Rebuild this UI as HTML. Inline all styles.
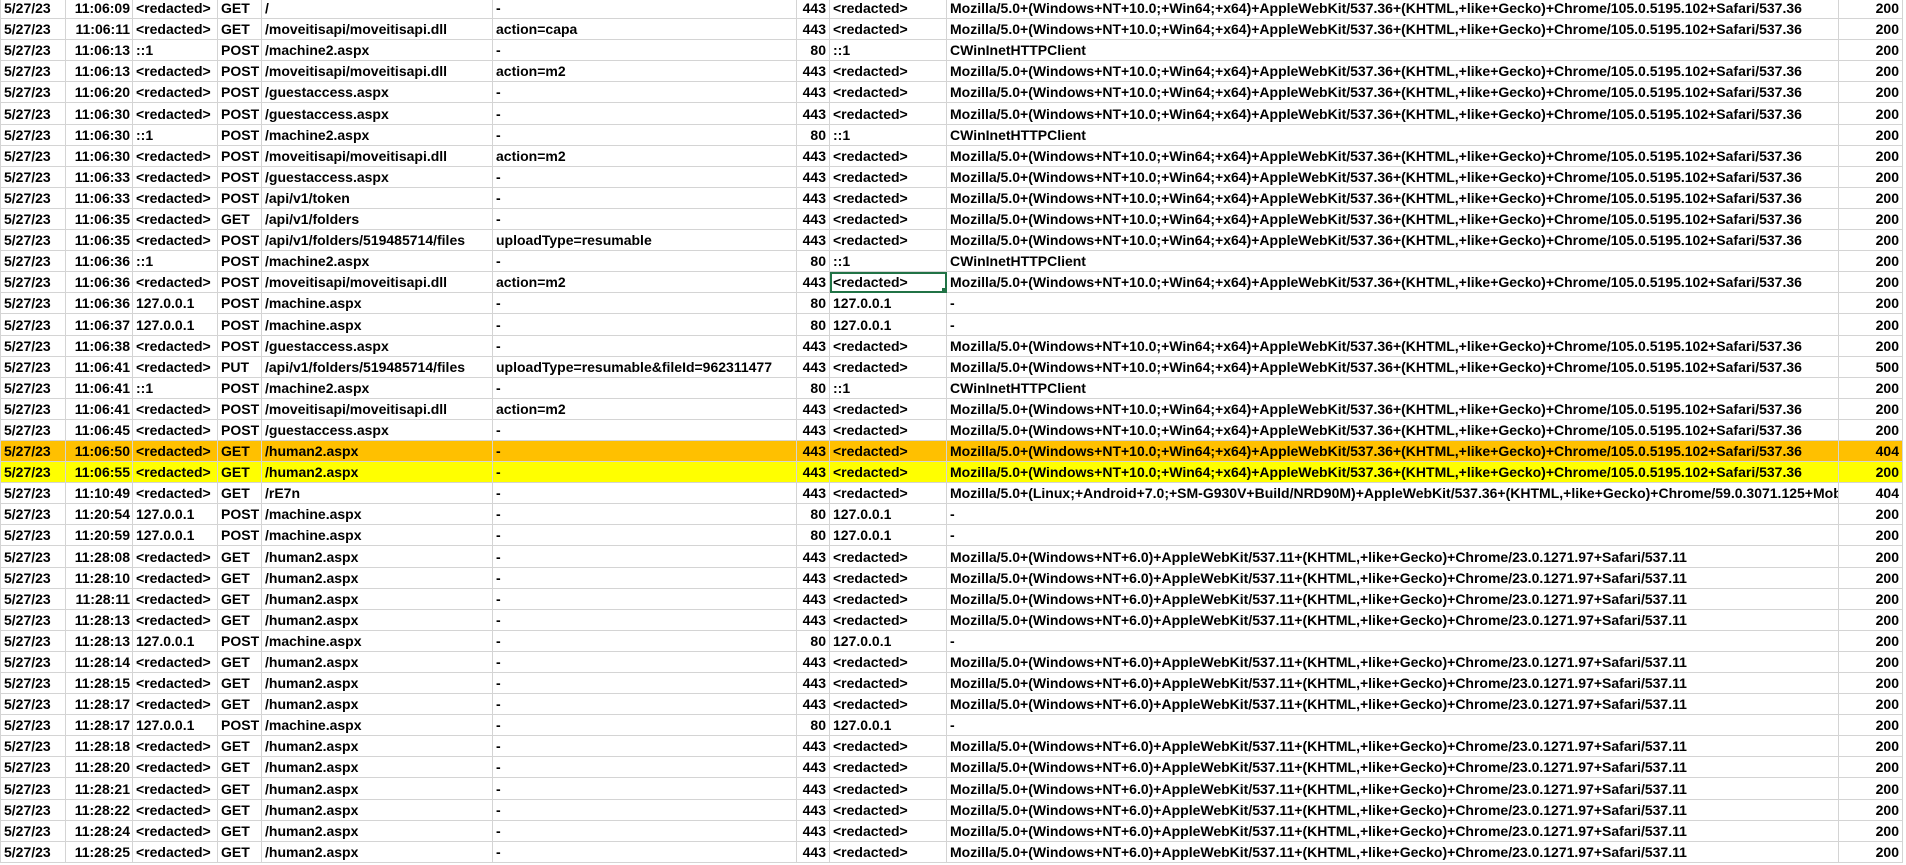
<!DOCTYPE html>
<html><head><meta charset="utf-8"><style>
html,body{margin:0;padding:0;background:#fff;width:1906px;height:865px;overflow:hidden}
table{position:absolute;left:0;top:-3px;border-collapse:collapse;table-layout:fixed;width:1902px;font-family:"Liberation Sans",Arial,sans-serif;font-weight:bold;font-size:14px;color:#000}
tr{height:21.1px}
td{border:1px solid #d4d4d4;height:21.1px;padding:0 3px 1px 3px;white-space:nowrap;overflow:hidden;vertical-align:bottom;line-height:17px;box-sizing:border-box}
td.r{text-align:right}
td.t{text-align:right;padding-right:2px}
tr.o td{background:#ffc000}
tr.y td{background:#ffff00}
td.sel{outline:2px solid #217346;outline-offset:-2px;position:relative}
td.sel:after{content:"";position:absolute;right:-1px;bottom:-1px;width:5px;height:5px;background:#217346}
</style></head><body>
<table>
<colgroup><col style="width:65px"><col style="width:67px"><col style="width:85px"><col style="width:44px"><col style="width:231px"><col style="width:304px"><col style="width:33px"><col style="width:117px"><col style="width:892px"><col style="width:64px"></colgroup>
<tr><td>5/27/23</td><td class="t">11:06:09</td><td>&lt;redacted&gt;</td><td>GET</td><td>/</td><td>-</td><td class="r">443</td><td>&lt;redacted&gt;</td><td>Mozilla/5.0+(Windows+NT+10.0;+Win64;+x64)+AppleWebKit/537.36+(KHTML,+like+Gecko)+Chrome/105.0.5195.102+Safari/537.36</td><td class="r">200</td></tr>
<tr><td>5/27/23</td><td class="t">11:06:11</td><td>&lt;redacted&gt;</td><td>GET</td><td>/moveitisapi/moveitisapi.dll</td><td>action=capa</td><td class="r">443</td><td>&lt;redacted&gt;</td><td>Mozilla/5.0+(Windows+NT+10.0;+Win64;+x64)+AppleWebKit/537.36+(KHTML,+like+Gecko)+Chrome/105.0.5195.102+Safari/537.36</td><td class="r">200</td></tr>
<tr><td>5/27/23</td><td class="t">11:06:13</td><td>::1</td><td>POST</td><td>/machine2.aspx</td><td>-</td><td class="r">80</td><td>::1</td><td>CWinInetHTTPClient</td><td class="r">200</td></tr>
<tr><td>5/27/23</td><td class="t">11:06:13</td><td>&lt;redacted&gt;</td><td>POST</td><td>/moveitisapi/moveitisapi.dll</td><td>action=m2</td><td class="r">443</td><td>&lt;redacted&gt;</td><td>Mozilla/5.0+(Windows+NT+10.0;+Win64;+x64)+AppleWebKit/537.36+(KHTML,+like+Gecko)+Chrome/105.0.5195.102+Safari/537.36</td><td class="r">200</td></tr>
<tr><td>5/27/23</td><td class="t">11:06:20</td><td>&lt;redacted&gt;</td><td>POST</td><td>/guestaccess.aspx</td><td>-</td><td class="r">443</td><td>&lt;redacted&gt;</td><td>Mozilla/5.0+(Windows+NT+10.0;+Win64;+x64)+AppleWebKit/537.36+(KHTML,+like+Gecko)+Chrome/105.0.5195.102+Safari/537.36</td><td class="r">200</td></tr>
<tr><td>5/27/23</td><td class="t">11:06:30</td><td>&lt;redacted&gt;</td><td>POST</td><td>/guestaccess.aspx</td><td>-</td><td class="r">443</td><td>&lt;redacted&gt;</td><td>Mozilla/5.0+(Windows+NT+10.0;+Win64;+x64)+AppleWebKit/537.36+(KHTML,+like+Gecko)+Chrome/105.0.5195.102+Safari/537.36</td><td class="r">200</td></tr>
<tr><td>5/27/23</td><td class="t">11:06:30</td><td>::1</td><td>POST</td><td>/machine2.aspx</td><td>-</td><td class="r">80</td><td>::1</td><td>CWinInetHTTPClient</td><td class="r">200</td></tr>
<tr><td>5/27/23</td><td class="t">11:06:30</td><td>&lt;redacted&gt;</td><td>POST</td><td>/moveitisapi/moveitisapi.dll</td><td>action=m2</td><td class="r">443</td><td>&lt;redacted&gt;</td><td>Mozilla/5.0+(Windows+NT+10.0;+Win64;+x64)+AppleWebKit/537.36+(KHTML,+like+Gecko)+Chrome/105.0.5195.102+Safari/537.36</td><td class="r">200</td></tr>
<tr><td>5/27/23</td><td class="t">11:06:33</td><td>&lt;redacted&gt;</td><td>POST</td><td>/guestaccess.aspx</td><td>-</td><td class="r">443</td><td>&lt;redacted&gt;</td><td>Mozilla/5.0+(Windows+NT+10.0;+Win64;+x64)+AppleWebKit/537.36+(KHTML,+like+Gecko)+Chrome/105.0.5195.102+Safari/537.36</td><td class="r">200</td></tr>
<tr><td>5/27/23</td><td class="t">11:06:33</td><td>&lt;redacted&gt;</td><td>POST</td><td>/api/v1/token</td><td>-</td><td class="r">443</td><td>&lt;redacted&gt;</td><td>Mozilla/5.0+(Windows+NT+10.0;+Win64;+x64)+AppleWebKit/537.36+(KHTML,+like+Gecko)+Chrome/105.0.5195.102+Safari/537.36</td><td class="r">200</td></tr>
<tr><td>5/27/23</td><td class="t">11:06:35</td><td>&lt;redacted&gt;</td><td>GET</td><td>/api/v1/folders</td><td>-</td><td class="r">443</td><td>&lt;redacted&gt;</td><td>Mozilla/5.0+(Windows+NT+10.0;+Win64;+x64)+AppleWebKit/537.36+(KHTML,+like+Gecko)+Chrome/105.0.5195.102+Safari/537.36</td><td class="r">200</td></tr>
<tr><td>5/27/23</td><td class="t">11:06:35</td><td>&lt;redacted&gt;</td><td>POST</td><td>/api/v1/folders/519485714/files</td><td>uploadType=resumable</td><td class="r">443</td><td>&lt;redacted&gt;</td><td>Mozilla/5.0+(Windows+NT+10.0;+Win64;+x64)+AppleWebKit/537.36+(KHTML,+like+Gecko)+Chrome/105.0.5195.102+Safari/537.36</td><td class="r">200</td></tr>
<tr><td>5/27/23</td><td class="t">11:06:36</td><td>::1</td><td>POST</td><td>/machine2.aspx</td><td>-</td><td class="r">80</td><td>::1</td><td>CWinInetHTTPClient</td><td class="r">200</td></tr>
<tr><td>5/27/23</td><td class="t">11:06:36</td><td>&lt;redacted&gt;</td><td>POST</td><td>/moveitisapi/moveitisapi.dll</td><td>action=m2</td><td class="r">443</td><td class="sel">&lt;redacted&gt;</td><td>Mozilla/5.0+(Windows+NT+10.0;+Win64;+x64)+AppleWebKit/537.36+(KHTML,+like+Gecko)+Chrome/105.0.5195.102+Safari/537.36</td><td class="r">200</td></tr>
<tr><td>5/27/23</td><td class="t">11:06:36</td><td>127.0.0.1</td><td>POST</td><td>/machine.aspx</td><td>-</td><td class="r">80</td><td>127.0.0.1</td><td>-</td><td class="r">200</td></tr>
<tr><td>5/27/23</td><td class="t">11:06:37</td><td>127.0.0.1</td><td>POST</td><td>/machine.aspx</td><td>-</td><td class="r">80</td><td>127.0.0.1</td><td>-</td><td class="r">200</td></tr>
<tr><td>5/27/23</td><td class="t">11:06:38</td><td>&lt;redacted&gt;</td><td>POST</td><td>/guestaccess.aspx</td><td>-</td><td class="r">443</td><td>&lt;redacted&gt;</td><td>Mozilla/5.0+(Windows+NT+10.0;+Win64;+x64)+AppleWebKit/537.36+(KHTML,+like+Gecko)+Chrome/105.0.5195.102+Safari/537.36</td><td class="r">200</td></tr>
<tr><td>5/27/23</td><td class="t">11:06:41</td><td>&lt;redacted&gt;</td><td>PUT</td><td>/api/v1/folders/519485714/files</td><td>uploadType=resumable&amp;fileId=962311477</td><td class="r">443</td><td>&lt;redacted&gt;</td><td>Mozilla/5.0+(Windows+NT+10.0;+Win64;+x64)+AppleWebKit/537.36+(KHTML,+like+Gecko)+Chrome/105.0.5195.102+Safari/537.36</td><td class="r">500</td></tr>
<tr><td>5/27/23</td><td class="t">11:06:41</td><td>::1</td><td>POST</td><td>/machine2.aspx</td><td>-</td><td class="r">80</td><td>::1</td><td>CWinInetHTTPClient</td><td class="r">200</td></tr>
<tr><td>5/27/23</td><td class="t">11:06:41</td><td>&lt;redacted&gt;</td><td>POST</td><td>/moveitisapi/moveitisapi.dll</td><td>action=m2</td><td class="r">443</td><td>&lt;redacted&gt;</td><td>Mozilla/5.0+(Windows+NT+10.0;+Win64;+x64)+AppleWebKit/537.36+(KHTML,+like+Gecko)+Chrome/105.0.5195.102+Safari/537.36</td><td class="r">200</td></tr>
<tr><td>5/27/23</td><td class="t">11:06:45</td><td>&lt;redacted&gt;</td><td>POST</td><td>/guestaccess.aspx</td><td>-</td><td class="r">443</td><td>&lt;redacted&gt;</td><td>Mozilla/5.0+(Windows+NT+10.0;+Win64;+x64)+AppleWebKit/537.36+(KHTML,+like+Gecko)+Chrome/105.0.5195.102+Safari/537.36</td><td class="r">200</td></tr>
<tr class="o"><td>5/27/23</td><td class="t">11:06:50</td><td>&lt;redacted&gt;</td><td>GET</td><td>/human2.aspx</td><td>-</td><td class="r">443</td><td>&lt;redacted&gt;</td><td>Mozilla/5.0+(Windows+NT+10.0;+Win64;+x64)+AppleWebKit/537.36+(KHTML,+like+Gecko)+Chrome/105.0.5195.102+Safari/537.36</td><td class="r">404</td></tr>
<tr class="y"><td>5/27/23</td><td class="t">11:06:55</td><td>&lt;redacted&gt;</td><td>GET</td><td>/human2.aspx</td><td>-</td><td class="r">443</td><td>&lt;redacted&gt;</td><td>Mozilla/5.0+(Windows+NT+10.0;+Win64;+x64)+AppleWebKit/537.36+(KHTML,+like+Gecko)+Chrome/105.0.5195.102+Safari/537.36</td><td class="r">200</td></tr>
<tr><td>5/27/23</td><td class="t">11:10:49</td><td>&lt;redacted&gt;</td><td>GET</td><td>/rE7n</td><td>-</td><td class="r">443</td><td>&lt;redacted&gt;</td><td>Mozilla/5.0+(Linux;+Android+7.0;+SM-G930V+Build/NRD90M)+AppleWebKit/537.36+(KHTML,+like+Gecko)+Chrome/59.0.3071.125+Mobile+Safari/537.36</td><td class="r">404</td></tr>
<tr><td>5/27/23</td><td class="t">11:20:54</td><td>127.0.0.1</td><td>POST</td><td>/machine.aspx</td><td>-</td><td class="r">80</td><td>127.0.0.1</td><td>-</td><td class="r">200</td></tr>
<tr><td>5/27/23</td><td class="t">11:20:59</td><td>127.0.0.1</td><td>POST</td><td>/machine.aspx</td><td>-</td><td class="r">80</td><td>127.0.0.1</td><td>-</td><td class="r">200</td></tr>
<tr><td>5/27/23</td><td class="t">11:28:08</td><td>&lt;redacted&gt;</td><td>GET</td><td>/human2.aspx</td><td>-</td><td class="r">443</td><td>&lt;redacted&gt;</td><td>Mozilla/5.0+(Windows+NT+6.0)+AppleWebKit/537.11+(KHTML,+like+Gecko)+Chrome/23.0.1271.97+Safari/537.11</td><td class="r">200</td></tr>
<tr><td>5/27/23</td><td class="t">11:28:10</td><td>&lt;redacted&gt;</td><td>GET</td><td>/human2.aspx</td><td>-</td><td class="r">443</td><td>&lt;redacted&gt;</td><td>Mozilla/5.0+(Windows+NT+6.0)+AppleWebKit/537.11+(KHTML,+like+Gecko)+Chrome/23.0.1271.97+Safari/537.11</td><td class="r">200</td></tr>
<tr><td>5/27/23</td><td class="t">11:28:11</td><td>&lt;redacted&gt;</td><td>GET</td><td>/human2.aspx</td><td>-</td><td class="r">443</td><td>&lt;redacted&gt;</td><td>Mozilla/5.0+(Windows+NT+6.0)+AppleWebKit/537.11+(KHTML,+like+Gecko)+Chrome/23.0.1271.97+Safari/537.11</td><td class="r">200</td></tr>
<tr><td>5/27/23</td><td class="t">11:28:13</td><td>&lt;redacted&gt;</td><td>GET</td><td>/human2.aspx</td><td>-</td><td class="r">443</td><td>&lt;redacted&gt;</td><td>Mozilla/5.0+(Windows+NT+6.0)+AppleWebKit/537.11+(KHTML,+like+Gecko)+Chrome/23.0.1271.97+Safari/537.11</td><td class="r">200</td></tr>
<tr><td>5/27/23</td><td class="t">11:28:13</td><td>127.0.0.1</td><td>POST</td><td>/machine.aspx</td><td>-</td><td class="r">80</td><td>127.0.0.1</td><td>-</td><td class="r">200</td></tr>
<tr><td>5/27/23</td><td class="t">11:28:14</td><td>&lt;redacted&gt;</td><td>GET</td><td>/human2.aspx</td><td>-</td><td class="r">443</td><td>&lt;redacted&gt;</td><td>Mozilla/5.0+(Windows+NT+6.0)+AppleWebKit/537.11+(KHTML,+like+Gecko)+Chrome/23.0.1271.97+Safari/537.11</td><td class="r">200</td></tr>
<tr><td>5/27/23</td><td class="t">11:28:15</td><td>&lt;redacted&gt;</td><td>GET</td><td>/human2.aspx</td><td>-</td><td class="r">443</td><td>&lt;redacted&gt;</td><td>Mozilla/5.0+(Windows+NT+6.0)+AppleWebKit/537.11+(KHTML,+like+Gecko)+Chrome/23.0.1271.97+Safari/537.11</td><td class="r">200</td></tr>
<tr><td>5/27/23</td><td class="t">11:28:17</td><td>&lt;redacted&gt;</td><td>GET</td><td>/human2.aspx</td><td>-</td><td class="r">443</td><td>&lt;redacted&gt;</td><td>Mozilla/5.0+(Windows+NT+6.0)+AppleWebKit/537.11+(KHTML,+like+Gecko)+Chrome/23.0.1271.97+Safari/537.11</td><td class="r">200</td></tr>
<tr><td>5/27/23</td><td class="t">11:28:17</td><td>127.0.0.1</td><td>POST</td><td>/machine.aspx</td><td>-</td><td class="r">80</td><td>127.0.0.1</td><td>-</td><td class="r">200</td></tr>
<tr><td>5/27/23</td><td class="t">11:28:18</td><td>&lt;redacted&gt;</td><td>GET</td><td>/human2.aspx</td><td>-</td><td class="r">443</td><td>&lt;redacted&gt;</td><td>Mozilla/5.0+(Windows+NT+6.0)+AppleWebKit/537.11+(KHTML,+like+Gecko)+Chrome/23.0.1271.97+Safari/537.11</td><td class="r">200</td></tr>
<tr><td>5/27/23</td><td class="t">11:28:20</td><td>&lt;redacted&gt;</td><td>GET</td><td>/human2.aspx</td><td>-</td><td class="r">443</td><td>&lt;redacted&gt;</td><td>Mozilla/5.0+(Windows+NT+6.0)+AppleWebKit/537.11+(KHTML,+like+Gecko)+Chrome/23.0.1271.97+Safari/537.11</td><td class="r">200</td></tr>
<tr><td>5/27/23</td><td class="t">11:28:21</td><td>&lt;redacted&gt;</td><td>GET</td><td>/human2.aspx</td><td>-</td><td class="r">443</td><td>&lt;redacted&gt;</td><td>Mozilla/5.0+(Windows+NT+6.0)+AppleWebKit/537.11+(KHTML,+like+Gecko)+Chrome/23.0.1271.97+Safari/537.11</td><td class="r">200</td></tr>
<tr><td>5/27/23</td><td class="t">11:28:22</td><td>&lt;redacted&gt;</td><td>GET</td><td>/human2.aspx</td><td>-</td><td class="r">443</td><td>&lt;redacted&gt;</td><td>Mozilla/5.0+(Windows+NT+6.0)+AppleWebKit/537.11+(KHTML,+like+Gecko)+Chrome/23.0.1271.97+Safari/537.11</td><td class="r">200</td></tr>
<tr><td>5/27/23</td><td class="t">11:28:24</td><td>&lt;redacted&gt;</td><td>GET</td><td>/human2.aspx</td><td>-</td><td class="r">443</td><td>&lt;redacted&gt;</td><td>Mozilla/5.0+(Windows+NT+6.0)+AppleWebKit/537.11+(KHTML,+like+Gecko)+Chrome/23.0.1271.97+Safari/537.11</td><td class="r">200</td></tr>
<tr><td>5/27/23</td><td class="t">11:28:25</td><td>&lt;redacted&gt;</td><td>GET</td><td>/human2.aspx</td><td>-</td><td class="r">443</td><td>&lt;redacted&gt;</td><td>Mozilla/5.0+(Windows+NT+6.0)+AppleWebKit/537.11+(KHTML,+like+Gecko)+Chrome/23.0.1271.97+Safari/537.11</td><td class="r">200</td></tr>
</table>
</body></html>
